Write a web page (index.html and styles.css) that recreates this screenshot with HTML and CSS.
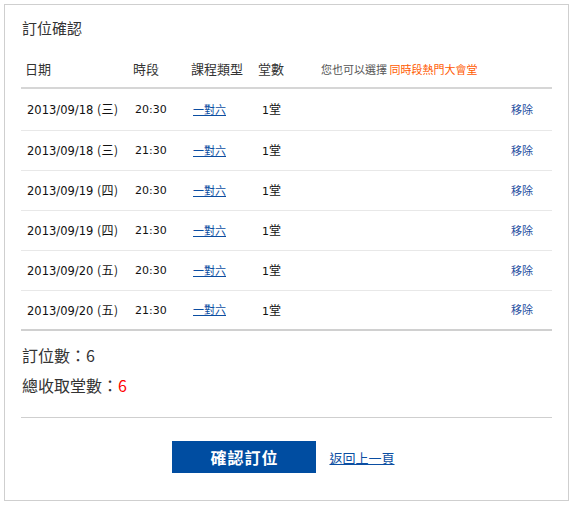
FILE: index.html
```html
<!DOCTYPE html>
<html lang="zh-Hant">
<head>
<meta charset="utf-8">
<title>訂位確認</title>
<link rel="stylesheet" href="styles.css">
</head>
<body>
<div class="box">
  <h1 class="title">訂位確認</h1>
  <div class="table">
    <div class="row head">
      <div class="c-date">日期</div>
      <div class="c-time">時段</div>
      <div class="c-type">課程類型</div>
      <div class="c-count">堂數</div>
      <div class="c-note">您也可以選擇 <span class="hot">同時段熱門大會堂</span></div>
      <div class="c-act"></div>
    </div>
    <div class="row first">
      <div class="c-date">2013/09/18 <span class="cjk">(三)</span></div>
      <div class="c-time">20:30</div>
      <div class="c-type"><a href="#" class="link">一對六</a></div>
      <div class="c-count">1<span class="cjk">堂</span></div>
      <div class="c-note"></div>
      <div class="c-act"><a href="#" class="remove">移除</a></div>
    </div>
    <div class="row">
      <div class="c-date">2013/09/18 <span class="cjk">(三)</span></div>
      <div class="c-time">21:30</div>
      <div class="c-type"><a href="#" class="link">一對六</a></div>
      <div class="c-count">1<span class="cjk">堂</span></div>
      <div class="c-note"></div>
      <div class="c-act"><a href="#" class="remove">移除</a></div>
    </div>
    <div class="row">
      <div class="c-date">2013/09/19 <span class="cjk">(四)</span></div>
      <div class="c-time">20:30</div>
      <div class="c-type"><a href="#" class="link">一對六</a></div>
      <div class="c-count">1<span class="cjk">堂</span></div>
      <div class="c-note"></div>
      <div class="c-act"><a href="#" class="remove">移除</a></div>
    </div>
    <div class="row">
      <div class="c-date">2013/09/19 <span class="cjk">(四)</span></div>
      <div class="c-time">21:30</div>
      <div class="c-type"><a href="#" class="link">一對六</a></div>
      <div class="c-count">1<span class="cjk">堂</span></div>
      <div class="c-note"></div>
      <div class="c-act"><a href="#" class="remove">移除</a></div>
    </div>
    <div class="row">
      <div class="c-date">2013/09/20 <span class="cjk">(五)</span></div>
      <div class="c-time">20:30</div>
      <div class="c-type"><a href="#" class="link">一對六</a></div>
      <div class="c-count">1<span class="cjk">堂</span></div>
      <div class="c-note"></div>
      <div class="c-act"><a href="#" class="remove">移除</a></div>
    </div>
    <div class="row last">
      <div class="c-date">2013/09/20 <span class="cjk">(五)</span></div>
      <div class="c-time">21:30</div>
      <div class="c-type"><a href="#" class="link">一對六</a></div>
      <div class="c-count">1<span class="cjk">堂</span></div>
      <div class="c-note"></div>
      <div class="c-act"><a href="#" class="remove">移除</a></div>
    </div>
  </div>
  <div class="summary">
    <p>訂位數：6</p>
    <p>總收取堂數：<span class="red">6</span></p>
  </div>
  <div class="actions">
    <button class="btn" type="button">確認訂位</button>
    <a href="#" class="back">返回上一頁</a>
  </div>
</div>
</body>
</html>
```
FILE: styles.css
```css
* { box-sizing: border-box; }
html, body { margin: 0; padding: 0; background: #fff; }
body {
  font-family: "DejaVu Sans", "Noto Sans CJK TC", sans-serif;
  color: #333;
}
.box {
  margin: 4px 0 0 4px;
  width: 565px;
  height: 497px;
  border: 1px solid #cfcfcf;
  padding: 0 16px;
}
.title {
  margin: 0;
  padding-top: 11px;
  font-family: "Noto Sans CJK TC", sans-serif;
  font-weight: normal;
  font-size: 15px;
  line-height: 24px;
  color: #333;
  padding-left: 1px;
}
.table { width: 100%; }
.row {
  display: grid;
  grid-template-columns: 108px 58px 67px 63px 1fr 60px;
  align-items: center;
  height: 40px;
  padding-bottom: 2px;
  border-bottom: 1px solid #e8e8e8;
  font-size: 11px;
  color: #111;
}
.row.head {
  height: 49px;
  padding: 16px 0 5px;
  line-height: 24px;
  border-bottom: 2px solid #d6d6d6;
  font-family: "Noto Sans CJK TC", sans-serif;
  font-size: 13px;
  color: #333;
}
.row.first { height: 42px; }
.row.head > div { padding-left: 4px; }
.row.head .c-note { font-size: 11px; color: #555; }
.row.last { border-bottom: 2px solid #d0d0d0; }
.row > .c-date, .row > .c-time, .row > .c-type { padding-left: 6px; }
.row:not(.head) > .c-date { font-size: 11.5px; }
.row:not(.head) > .c-time { padding-top: 2px; }
.row > .c-count { padding-left: 8px; }
.row > .c-act { text-align: right; padding-right: 19px; }
.hot { color: #ff5a00; }
.cjk { font-family: "Noto Sans CJK TC", sans-serif; font-size: 12px; letter-spacing: 0.5px; }
.link {
  font-family: "Noto Sans CJK TC", sans-serif;
  font-size: 11px;
  color: #0b4ea2;
  text-decoration: underline;
}
.remove {
  font-family: "Noto Sans CJK TC", sans-serif;
  font-size: 11px;
  color: #1f4f9f;
  text-decoration: none;
}
.summary {
  padding: 9px 0 17px 1px;
  border-bottom: 1px solid #cfcfcf;
  font-family: "Noto Sans CJK TC", sans-serif;
  font-size: 16px;
  color: #333;
}
.summary p { margin: 0; line-height: 30px; }
.red { color: #ff0000; }
.actions {
  display: flex;
  justify-content: center;
  align-items: center;
  gap: 13px;
  padding-top: 23px;
  padding-right: 6px;
}
.btn {
  width: 144px;
  height: 32px;
  border: 0;
  background: #004da1;
  color: #fff;
  font-family: "Noto Sans CJK TC", sans-serif;
  font-size: 16px;
  font-weight: bold;
  letter-spacing: 1px;
  cursor: pointer;
}
.back {
  font-family: "Noto Sans CJK TC", sans-serif;
  font-size: 13px;
  color: #0b4ea2;
  text-decoration: underline;
}
```
